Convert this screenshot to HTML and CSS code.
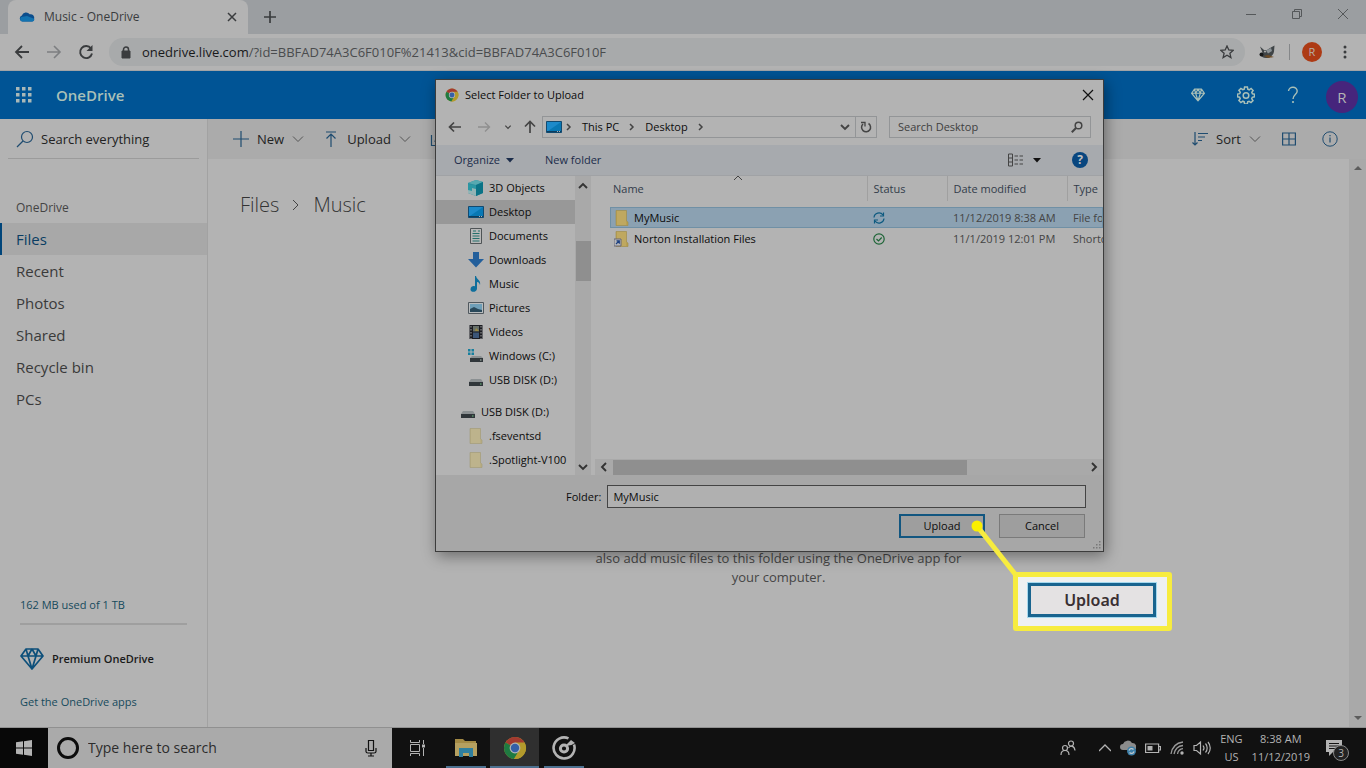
FILE: index.html
```html
<!DOCTYPE html>
<html lang="en">
<head>
<meta charset="utf-8">
<title>Music - OneDrive</title>
<link rel="stylesheet" href="styles.css">
</head>
<body>
<svg class="sprite" aria-hidden="true">
  <symbol id="chrome" viewBox="0 0 24 24">
    <circle cx="12" cy="12" r="11" fill="#b39a2c"/>
    <path d="M12 12 L2.5 6.5 A11 11 0 0 1 21.5 6.5 Z" fill="#a33a30"/>
    <path d="M12 12 L2.5 6.5 A11 11 0 0 0 11 23 L16 14.5 Z" fill="#1f7a41"/>
    <path d="M12 6.5 H21.5 A11 11 0 0 1 11 23 L16.5 14.5 Z" fill="#b39a2c"/>
    <circle cx="12" cy="12" r="5.4" fill="#b3b3b3"/>
    <circle cx="12" cy="12" r="4.2" fill="#3560a8"/>
  </symbol>
  <symbol id="folder" viewBox="0 0 16 16">
    <path d="M2 .5h10.500v10.500l1.500 1v3.500H2z" fill="#b8a052" stroke="#a08c48" stroke-width=".6"/>
    <path d="M3 1h9v14H3z" fill="#bfa860"/>
  </symbol>
  <symbol id="folder-pale" viewBox="0 0 16 16">
    <path d="M2 .5h10.500v10.500l1.500 1v3.500H2z" fill="#b8ad84" stroke="#a39a76" stroke-width=".6"/>
    <path d="M3 1h9v14H3z" fill="#bdb38c"/>
  </symbol>
  <symbol id="diamond" viewBox="0 0 24 24">
    <path d="M6 2h12l5 7-11 13L1 9zM1 9h22M6 2l2 7 4 13 4-13 2-7M8 9l4-7 4 7" fill="none" stroke="currentColor" stroke-width="1.700" stroke-linejoin="round"/>
  </symbol>
  <symbol id="chev" viewBox="0 0 12 12"><path d="M1 3.500l5 5 5-5" fill="none" stroke="currentColor" stroke-width="1"/></symbol>
  <symbol id="chev-bold" viewBox="0 0 12 12"><path d="M2 4l4 4 4-4" fill="none" stroke="currentColor" stroke-width="1.900"/></symbol>
  <symbol id="desktop" viewBox="0 0 16 16">
    <path d="M.5 2.500h15v11H.5z" fill="#0878b4" stroke="#124a70"/><path d="M1 3h14L2 12H1z" fill="#1c8aca"/><path d="M1 12.500h14" stroke="#0d3d5e"/><path d="M11 12.500h1M13 12.500h1" stroke="#b3b3b3"/>
  </symbol>
  <symbol id="drive" viewBox="0 0 16 16">
    <path d="M3 7h10l2 3H1z" fill="#8b9092"/><path d="M1 10h14v4H1z" fill="#30363a"/><path d="M12 12h1.500" stroke="#6cc080" stroke-width="1.200"/>
  </symbol>
</svg>

<header class="tabs">
  <div class="tab">
    <svg class="i16 cloud" viewBox="0 0 18 12"><path d="M4 11a3.500 3.500 0 0 1-.8-6.800A5 5 0 0 1 12 3a4 4 0 0 1 5 5 2.500 2.500 0 0 1-2 3z" fill="#0b4d8c"/><path d="M3 11a3 3 0 0 1-.6-5L9 5l8 3a2.300 2.300 0 0 1-2 3z" fill="#1373b0"/></svg>
    <span class="tab-title">Music - OneDrive</span>
    <button class="bare" aria-label="Close tab"><svg class="i10" viewBox="0 0 10 10"><path d="M1 1l8 8M9 1L1 9" stroke="#3a3c3e" stroke-width="1.500"/></svg></button>
  </div>
  <button class="bare newtab" aria-label="New tab"><svg class="i12" viewBox="0 0 12 12"><path d="M6 0v12M0 6h12" stroke="#3a3c3e" stroke-width="1.700"/></svg></button>
  <div class="winctl">
    <button class="bare" aria-label="Minimize"><svg class="i12" viewBox="0 0 12 12"><path d="M1 6.500h10" stroke="#55585a"/></svg></button>
    <button class="bare" aria-label="Restore"><svg class="i12" viewBox="0 0 12 12"><path d="M1.500 3.500h7v7h-7zM3.500 3.500v-2h7v7h-2" fill="none" stroke="#55585a"/></svg></button>
    <button class="bare" aria-label="Close"><svg class="i12" viewBox="0 0 12 12"><path d="M1 1l10 10M11 1L1 11" stroke="#55585a"/></svg></button>
  </div>
</header>

<div class="toolbar">
  <button class="bare" aria-label="Back"><svg class="i16" viewBox="0 0 16 16"><path d="M15 8H2M8 2L2 8l6 6" fill="none" stroke="#3a3c3e" stroke-width="1.800"/></svg></button>
  <button class="bare" aria-label="Forward"><svg class="i16" viewBox="0 0 16 16"><path d="M1 8h13M8 2l6 6-6 6" fill="none" stroke="#7d7f81" stroke-width="1.600"/></svg></button>
  <button class="bare" aria-label="Reload"><svg class="i16" viewBox="0 0 16 16"><path d="M13 4.500A6 6 0 1 0 14 9.500" fill="none" stroke="#3a3c3e" stroke-width="1.900"/><path d="M14.500 1v6h-6z" fill="#3a3c3e"/></svg></button>
  <div class="omnibox">
    <svg class="lock" viewBox="0 0 10 13"><path d="M1 5h8v7H1z" fill="#3a3c3e" stroke="#3a3c3e" stroke-linejoin="round"/><path d="M2.500 5V3.500a2.500 2.500 0 0 1 5 0V5" fill="none" stroke="#3a3c3e" stroke-width="1.500"/></svg>
    <span class="url"><span class="host">onedrive.live.com</span>/?id=BBFAD74A3C6F010F%21413&amp;cid=BBFAD74A3C6F010F</span>
    <button class="bare star" aria-label="Bookmark"><svg class="i14" viewBox="0 0 14 14"><path d="M7 1l1.800 4 4.400.400-3.300 2.900 1 4.300L7 10.300l-3.900 2.300 1-4.300L.8 5.400l4.400-.4z" fill="none" stroke="#3a3c3e" stroke-width="1.300"/></svg></button>
  </div>
  <svg class="i16 ext" viewBox="0 0 16 16"><path d="M1 2.500l4 3.500h3l3-2 4.500-2.500-.5 6c-.5 4-4 6.500-8 6.500-3 0-5-1.500-6-4l2.500-1.500z" fill="#3f4447"/><path d="M7 6.500l5-2.500 1 3-4 2.500z" fill="#8b9296"/><circle cx="2.500" cy="10.500" r="2" fill="#17191a"/><circle cx="6" cy="7.500" r="1" fill="#b3b3b3"/><path d="M5 12l4-1 6 2-6 1z" fill="#6b4a25"/></svg>
  <span class="bar"></span>
  <span class="profile">R</span>
  <button class="bare" aria-label="Menu"><svg class="i14" viewBox="0 0 14 14"><g fill="#3a3c3e"><circle cx="7" cy="2" r="1.500"/><circle cx="7" cy="7" r="1.500"/><circle cx="7" cy="12" r="1.500"/></g></svg></button>
</div>

<div class="suite">
  <svg class="i16" viewBox="0 0 16 16"><g fill="#a9b8b8"><path d="M0 0h3.500v3.500H0zM6 0h3.500v3.500H6zM12 0h3.500v3.500H12zM0 6h3.500v3.500H0zM6 6h3.500v3.500H6zM12 6h3.500v3.500H12zM0 12h3.500v3.500H0zM6 12h3.500v3.500H6zM12 12h3.500v3.500H12z"/></g></svg>
  <h1 class="brand">OneDrive</h1>
  <div class="suite-icons">
    <svg class="i14" viewBox="0 0 24 24"><path d="M6 2h12l5 7-11 13L1 9zM1 9h22M6 2l2 7 4 13 4-13 2-7M8 9l4-7 4 7" fill="none" stroke="currentColor" stroke-width="2" stroke-linejoin="round"/></svg>
    <svg class="i18" viewBox="0 0 18 18"><path d="M7.600 1h2.800l.4 2.200 1.400.6 1.900-1.300 2 2-1.300 1.900.6 1.400 2.100.4v2.600l-2.200.5-.6 1.400 1.300 1.900-2 2-1.900-1.300-1.400.6-.4 2.100H7.600l-.4-2.200-1.400-.6-1.900 1.300-2-2 1.300-1.900-.6-1.400-2.100-.4V8.100l2.200-.4.6-1.400-1.400-1.900 2-2 1.900 1.300 1.400-.6z" fill="none" stroke="currentColor" stroke-width="1.500"/><circle cx="9" cy="9.500" r="2.800" fill="none" stroke="currentColor" stroke-width="1.500"/></svg>
    <svg class="i18" viewBox="0 0 18 18"><path d="M4.500 5A4.300 4.300 0 0 1 9 1.200 4 4 0 0 1 13.200 5c0 3.500-4.200 3.500-4.200 8" fill="none" stroke="currentColor" stroke-width="1.400"/><circle cx="9" cy="16" r="1.100" fill="currentColor"/></svg>
    <span class="avatar">R</span>
  </div>
</div>

<div class="app">
  <aside class="side">
    <label class="search"><svg class="i18" viewBox="0 0 18 18"><circle cx="11" cy="7" r="5.500" fill="none" stroke="#1f4c70" stroke-width="1.200"/><path d="M7 11l-6 6" stroke="#1f4c70" stroke-width="1.200"/></svg><input type="text" placeholder="Search everything" aria-label="Search everything"></label>
    <h2 class="side-title">OneDrive</h2>
    <nav class="side-nav">
      <a class="on" href="#">Files</a><a href="#">Recent</a><a href="#">Photos</a><a href="#">Shared</a><a href="#">Recycle bin</a><a href="#">PCs</a>
    </nav>
    <div class="side-foot">
      <a class="used" href="#">162 MB used of 1 TB</a>
      <a class="premium" href="#"><svg class="i24" viewBox="0 0 24 24"><use href="#diamond"/></svg>Premium OneDrive</a>
      <a class="apps" href="#">Get the OneDrive apps</a>
    </div>
  </aside>
  <main class="main">
    <div class="cmd">
      <button class="bare"><svg class="i16" viewBox="0 0 16 16"><path d="M8 0v16M0 8h16" stroke="#1f4c70" stroke-width="1.200"/></svg>New<svg class="i12 dim" viewBox="0 0 12 12"><use href="#chev"/></svg></button>
      <button class="bare"><svg class="i16" viewBox="0 0 16 16"><path d="M3 1h10M8 16V3M3.500 7.500L8 3l4.500 4.500" fill="none" stroke="#1f4c70" stroke-width="1.200"/></svg>Upload<svg class="i12 dim" viewBox="0 0 12 12"><use href="#chev"/></svg></button>
      <svg class="i16" viewBox="0 0 16 16"><path d="M1.500 4v10.500H13V10M5 11c0-4 3-6 8-6" fill="none" stroke="#1f4c70" stroke-width="1.200"/></svg>
      <button class="bare sort"><svg class="i16" viewBox="0 0 16 16"><path d="M3 1v13M.5 11.500L3 14l2.500-2.500M6 2.500h10M6 6h7M6 9.500h4" fill="none" stroke="#1f4c70" stroke-width="1.200"/></svg>Sort<svg class="i12 dim" viewBox="0 0 12 12"><use href="#chev"/></svg></button>
      <button class="bare" aria-label="Tiles"><svg class="i14" viewBox="0 0 14 14"><path d="M.6 1h12.800v12H.6zM7 1v12M.6 7h12.800" fill="none" stroke="#1f4c70" stroke-width="1.200"/></svg></button>
      <button class="bare info" aria-label="Details"><svg class="i16" viewBox="0 0 16 16"><circle cx="8" cy="8" r="7.200" fill="none" stroke="#1f4c70"/><path d="M8 6.500v5M8 4v1.300" stroke="#1f4c70" stroke-width="1.200"/></svg></button>
    </div>
    <div class="stage">
      <div class="content">
        <div class="crumbs"><a href="#">Files</a><svg class="i12" viewBox="0 0 12 12"><path d="M3 1l5 5-5 5" fill="none" stroke="#444"/></svg><span>Music</span></div>
        <p class="empty">also add music files to this folder using the OneDrive app for your computer.</p>
      </div>
      <div class="page-scroll"><svg class="i10" viewBox="0 0 10 10"><path d="M1 7l4-4 4 4z" fill="#5c5c5c"/></svg><svg class="i10" viewBox="0 0 10 10"><path d="M1 3l4 4 4-4z" fill="#5c5c5c"/></svg></div>
    </div>
  </main>
</div>

<footer class="taskbar">
  <button class="bare start" aria-label="Start"><svg class="i16" viewBox="0 0 16 16"><path d="M0 2.300L7 1.300v6.200H0zM8 1.200L16 0v7.500H8zM0 8.500h7v6.200l-7-1zM8 8.500h8V16l-8-1.200z" fill="#b3b3b3"/></svg></button>
  <label class="tsearch"><span class="cortana"></span><input type="text" placeholder="Type here to search" aria-label="Type here to search"><svg class="i18" viewBox="0 0 18 18"><path d="M6.500 1.500h5v10h-5zM4 9v3.500c0 1 1 1.500 2 1.500h6c1 0 2-.5 2-1.500V9M9 14v3M6 17h6" fill="none" stroke="#111" stroke-width="1.200"/></svg></label>
  <button class="bare task" aria-label="Task view"><svg class="i18" viewBox="0 0 18 18"><path d="M2.500 5.500h9v7h-9zM2.500 1v2.500h9V1M2.500 17v-2.500h9V17M15.500 1v4M15.500 9v8" fill="none" stroke="#b3b3b3"/><path d="M14 5.500h3v3h-3z" fill="#b3b3b3"/></svg></button>
  <button class="bare task open" aria-label="File Explorer"><svg class="i24" viewBox="0 0 24 24"><path d="M1 3h8l2 2h11v15H1z" fill="#a38a45"/><path d="M1 7h22v13H1z" fill="#b5a060"/><path d="M5 12h14v9h-4v-4H9v4H5z" fill="#2f7f9e"/></svg></button>
  <button class="bare task open active" aria-label="Chrome"><svg class="i24" viewBox="0 0 24 24"><use href="#chrome"/></svg></button>
  <button class="bare task open" aria-label="Groove Music"><svg class="i24" viewBox="0 0 24 24"><path d="M16.500 2.400A10.500 10.500 0 1 0 22 8.500" fill="none" stroke="#b3b3b3" stroke-width="2.600"/><circle cx="12" cy="12.500" r="3.600" fill="none" stroke="#b3b3b3" stroke-width="3"/><path d="M14.500 12V8.500L19 4l4 3-3.500 2-3 .5z" fill="#b3b3b3"/></svg></button>
  <div class="tray">
    <svg class="i16 people" viewBox="0 0 16 16"><g fill="none" stroke="#b3b3b3" stroke-width="1.200"><circle cx="5" cy="8" r="2.500"/><path d="M1 15c0-6 8-6 8 0"/><circle cx="11" cy="3.500" r="2.500"/><path d="M8.500 8c2-3 6-2 6.500 2.500"/></g></svg>
    <svg class="i12" viewBox="0 0 12 12"><path d="M0 9l6-6 6 6" fill="none" stroke="#b3b3b3" stroke-width="1.300"/></svg>
    <svg class="i16" viewBox="0 0 16 16"><path d="M3 10a3 3 0 0 1 0-6 5 5 0 0 1 9-1 4 4 0 0 1 3 7z" fill="#8c8c8c"/><circle cx="11.500" cy="11" r="4.500" fill="#3d7fa8"/><path d="M9 10.500a2.600 2.600 0 0 1 4.500-1M14 11.500a2.600 2.600 0 0 1-4.500 1" stroke="#c0c8cc" fill="none" stroke-width="1.200"/></svg>
    <svg class="i16" viewBox="0 0 16 16"><path d="M.6 4h13v8.500H.6zM14 6.500h1.500v3.500H14" fill="none" stroke="#b3b3b3" stroke-width="1.200"/><path d="M2.500 6h5v4.500h-5z" fill="#b3b3b3"/></svg>
    <svg class="i14" viewBox="0 0 14 14"><g fill="none" stroke="#999" stroke-width="1.300"><path d="M1 13C2 6 6 2 13 1"/><path d="M4 13c1-5 4-8 9-8.500"/><path d="M7.500 13c.5-3 2.500-5 5.500-5.300"/></g><circle cx="12" cy="12" r="1.700" fill="#b3b3b3"/></svg>
    <svg class="i18" viewBox="0 0 18 18"><g fill="none" stroke="#b3b3b3" stroke-width="1.200"><path d="M1 6.500h2.500L7.500 3v12l-4-3.500H1zM10 6.500c1.200 1.500 1.200 3.500 0 5M12.500 4.500c2.200 2.500 2.200 6.500 0 9M15 3c3 3.500 3 8.500 0 12"/></g></svg>
    <div class="stack">ENG<br>US</div>
    <div class="stack clock">8:38 AM<br>11/12/2019</div>
    <div class="notif"><svg class="i18" viewBox="0 0 18 18"><path d="M1 1h16v12H8l-4 4v-4H1z" fill="#b3b3b3"/><path d="M4 4.500h10M4 7h10M4 9.500h7" stroke="#141414"/></svg><span class="count">3</span></div>
  </div>
</footer>

<section class="dialog" role="dialog" aria-label="Select Folder to Upload">
  <div class="d-title"><svg class="i14" viewBox="0 0 24 24"><use href="#chrome"/></svg><span>Select Folder to Upload</span><button class="bare" aria-label="Close"><svg class="i12" viewBox="0 0 12 12"><path d="M1 1l10 10M11 1L1 11" stroke="#111" stroke-width="1.200"/></svg></button></div>
  <div class="d-nav">
    <button class="bare" aria-label="Back"><svg class="i14" viewBox="0 0 14 14"><path d="M13 7H2M6 2.500L1.500 7 6 11.500" fill="none" stroke="#444" stroke-width="1.700"/></svg></button>
    <button class="bare" aria-label="Forward"><svg class="i14" viewBox="0 0 14 14"><path d="M1 7h11M8 2.500L12.500 7 8 11.500" fill="none" stroke="#8f8f8f" stroke-width="1.400"/></svg></button>
    <button class="bare hist" aria-label="Recent"><svg class="i8" viewBox="0 0 12 12"><use href="#chev-bold"/></svg></button>
    <button class="bare" aria-label="Up"><svg class="i14" viewBox="0 0 14 14"><path d="M7 13V2M2 6.500L7 1.500l5 5" fill="none" stroke="#444" stroke-width="1.700"/></svg></button>
    <div class="path"><svg class="i16" viewBox="0 0 16 16"><use href="#desktop"/></svg><svg class="i8" viewBox="0 0 8 8"><path d="M2 1l3 3-3 3" fill="none" stroke="#444" stroke-width="1.500"/></svg><span>This PC</span><svg class="i8" viewBox="0 0 8 8"><path d="M2 1l3 3-3 3" fill="none" stroke="#444" stroke-width="1.500"/></svg><span>Desktop</span><svg class="i8" viewBox="0 0 8 8"><path d="M2 1l3 3-3 3" fill="none" stroke="#444" stroke-width="1.500"/></svg>
      <button class="bare drop" aria-label="Previous locations"><svg class="i12" viewBox="0 0 12 12"><use href="#chev-bold"/></svg></button>
      <button class="bare refresh" aria-label="Refresh"><svg class="i12" viewBox="0 0 12 12"><path d="M8.500 2.500A4.500 4.500 0 1 1 3 3" fill="none" stroke="#444" stroke-width="1.500"/><path d="M1 1.500h4v4" fill="none" stroke="#444" stroke-width="1.300"/></svg></button>
    </div>
    <label class="d-search"><input type="text" placeholder="Search Desktop" aria-label="Search Desktop"><svg class="i12" viewBox="0 0 12 12"><circle cx="7.500" cy="4.500" r="3.300" fill="none" stroke="#444" stroke-width="1.500"/><path d="M5 7L.8 11.200" stroke="#444" stroke-width="2"/></svg></label>
  </div>
  <div class="d-tools">
    <button class="bare">Organize<svg class="i8" viewBox="0 0 8 8"><path d="M0 2h8L4 6.500z" fill="#1b2c4a"/></svg></button>
    <button class="bare">New folder</button>
    <button class="bare view" aria-label="Change view"><svg class="i16" viewBox="0 0 16 14"><path d="M.5 1h4v12h-4zM.5 5h4M.5 9h4M6.500 3H10M11.500 3H15M6.500 7H10M11.500 7H15M6.500 11H10M11.500 11H15" fill="none" stroke="#444"/></svg><svg class="i8" viewBox="0 0 8 8"><path d="M0 2h8L4 6.500z" fill="#111"/></svg></button>
    <button class="help" aria-label="Help">?</button>
  </div>
  <div class="d-body">
    <div class="tree">
      <a class="row" href="#"><svg class="i16" viewBox="0 0 16 16"><path d="M0 3l8-3 7 2v11l-7 3-8-3z" fill="#2a8d9d"/><path d="M0 3l8-3 7 2-7 3z" fill="#56a9b0"/><path d="M0 4l8 1.500V9l-4-1v4l-4-1z" fill="#2b97a3"/><path d="M0 10l4 1V8l4 1v7l-8-3z" fill="#93b4b5"/><path d="M8 5l7-3v11l-7 3z" fill="#0b7386"/></svg>3D Objects</a>
      <a class="row on" href="#"><svg class="i16" viewBox="0 0 16 16"><use href="#desktop"/></svg>Desktop</a>
      <a class="row" href="#"><svg class="i16" viewBox="0 0 16 16"><path d="M2.500.5h11v15h-11z" fill="#b8b8b8" stroke="#4f5456"/><path d="M5 3h3M10 3h2M4.500 5.500h7M4.500 8h7M4.500 10.500h7M4.500 13h7" stroke="#25706c"/></svg>Documents</a>
      <a class="row" href="#"><svg class="i16" viewBox="0 0 16 16"><path d="M5 0h6v7h5l-8 8.500L0 7h5z" fill="#235f9b"/></svg>Downloads</a>
      <a class="row" href="#"><svg class="i16" viewBox="0 0 16 16"><path d="M8 0c1 4 5 4 4 9-.5-2-1.500-3-3-3v6.500c0 4-6.500 4.500-6.500 1S6 9.500 7 10.500V0z" fill="#0f6f9c"/></svg>Music</a>
      <a class="row" href="#"><svg class="i16" viewBox="0 0 16 16"><path d="M.5 2.500h15v11H.5z" fill="#b8bcbe" stroke="#50585e"/><path d="M2 4h12v8H2z" fill="#6f9fb8"/><path d="M2 9l4-2 4 2 4 1v2H2z" fill="#29485a"/></svg>Pictures</a>
      <a class="row" href="#"><svg class="i16" viewBox="0 0 16 16"><path d="M1.500 1h13v14h-13z" fill="#1b1c22"/><path d="M5 2h6v5.500H5z" fill="#67706a"/><path d="M5 8.500h6V14H5z" fill="#3c5678"/><path d="M3 2v13M13 2v13" stroke="#a0a0a0" stroke-dasharray="1.500 1.500"/><path d="M8 4l3 3H7z" fill="#9c8a40"/></svg>Videos</a>
      <a class="row" href="#"><svg class="i16" viewBox="0 0 16 16"><path d="M0 1h2.500v2.500H0zM3.500 1H6v2.500H3.500zM0 4.500h2.500V7H0zM3.500 4.500H6V7H3.500z" fill="#167f9e"/><path d="M4 8h9l2 2H2z" fill="#8b9092"/><path d="M2 10h13v4H2z" fill="#30363a"/><path d="M12 12h1.500" stroke="#b0c0b4"/></svg>Windows (C:)</a>
      <a class="row" href="#"><svg class="i16" viewBox="0 0 16 16"><use href="#drive"/></svg>USB DISK (D:)</a>
      <a class="row root" href="#"><svg class="i16" viewBox="0 0 16 16"><use href="#drive"/></svg>USB DISK (D:)</a>
      <a class="row" href="#"><svg class="i16" viewBox="0 0 16 16"><use href="#folder-pale"/></svg>.fseventsd</a>
      <a class="row" href="#"><svg class="i16" viewBox="0 0 16 16"><use href="#folder-pale"/></svg>.Spotlight-V100</a>
    </div>
    <div class="vscroll"><svg class="i12 flip" viewBox="0 0 12 12"><use href="#chev-bold"/></svg><span class="vthumb"></span><svg class="i12" viewBox="0 0 12 12"><use href="#chev-bold"/></svg></div>
    <div class="files">
      <svg class="i10 sorted" viewBox="0 0 10 10"><path d="M1 7l4-4 4 4" fill="none" stroke="#444"/></svg>
      <table>
        <colgroup><col><col class="c-status"><col class="c-date"><col class="c-type"></colgroup>
        <thead><tr><th>Name</th><th>Status</th><th>Date modified</th><th>Type</th></tr></thead>
        <tbody>
          <tr class="sel"><td><span class="file"><svg class="i16" viewBox="0 0 16 16"><use href="#folder"/></svg>MyMusic</span></td><td><svg class="i12" viewBox="0 0 12 12"><path d="M1 5.500a5 5 0 0 1 9-2.500M11 6.500A5 5 0 0 1 2 9M10.500.5V4H7M1.500 11.500V8H5" fill="none" stroke="#0d5a80" stroke-width="1.200"/></svg></td><td>11/12/2019 8:38 AM</td><td>File folder</td></tr>
          <tr><td><span class="file"><svg class="i16" viewBox="0 0 16 16"><use href="#folder"/><path d="M0 8h7v7H0z" fill="#b8b8b8" stroke="#667"/><path d="M2 13l3-3M2.500 9.800H5.300v3" stroke="#1b3f80" fill="none" stroke-width="1.200"/></svg>Norton Installation Files</span></td><td><svg class="i12" viewBox="0 0 12 12"><circle cx="6" cy="6" r="5.200" fill="none" stroke="#1c6436" stroke-width="1.200"/><path d="M3.500 6l2 2 3.200-3.500" fill="none" stroke="#1c6436" stroke-width="1.200"/></svg></td><td>11/1/2019 12:01 PM</td><td>Shortcut</td></tr>
        </tbody>
      </table>
      <div class="hscroll"><svg class="i12 left" viewBox="0 0 12 12"><use href="#chev-bold"/></svg><span class="htrack"><span class="hthumb"></span></span><svg class="i12 right" viewBox="0 0 12 12"><use href="#chev-bold"/></svg></div>
    </div>
  </div>
  <div class="d-foot">
    <div class="field"><label for="folder-name">Folder:</label><input id="folder-name" type="text" value="MyMusic"></div>
    <div class="actions"><button class="btn primary">Upload</button><button class="btn">Cancel</button></div>
    <svg class="i8 grip" viewBox="0 0 8 8"><path d="M6 0h1.500v1.500H6zM3 3h1.500v1.500H3zM6 3h1.500v1.500H6zM0 6h1.500v1.500H0zM3 6h1.500v1.500H3zM6 6h1.500v1.500H6z" fill="#787878"/></svg>
  </div>
</section>

<svg class="pointer" viewBox="0 0 50 60"><path d="M7 7l38 48" stroke="#f7ec3f" stroke-width="5"/><circle cx="7" cy="7" r="5.500" fill="#fbf000"/></svg>
<div class="callout"><span>Upload</span></div>
</body>
</html>
```
FILE: styles.css
```css
* { box-sizing: border-box; }
html, body { height: 100%; }
body {
  margin: 0;
  display: flex;
  flex-direction: column;
  position: relative;
  overflow: hidden;
  background: #b3b3b3;
  color: #222;
  font: 13px/18px "Open Sans", "Noto Sans", sans-serif;
}
a { color: inherit; text-decoration: none; }
h1, h2, p { margin: 0; font-weight: 400; }
svg { flex: none; display: block; }
input { font: inherit; color: inherit; border: 0; background: none; padding: 0; min-width: 0; outline: 0; }
input::placeholder { color: inherit; opacity: 1; }
.bare { font: inherit; color: inherit; background: none; border: 0; padding: 0; display: flex; align-items: center; }
.sprite { position: absolute; width: 0; height: 0; }
.i8 { width: 8px; height: 8px; }
.i10 { width: 10px; height: 10px; }
.i12 { width: 12px; height: 12px; }
.i14 { width: 14px; height: 14px; }
.i16 { width: 16px; height: 16px; }
.i18 { width: 18px; height: 18px; }
.i24 { width: 24px; height: 24px; }
.dim { color: #555; }

/* Browser chrome */
.tabs { display: flex; flex: none; height: 34px; background: #9b9ea1; padding-left: 8px; }
.tab { display: flex; align-items: center; width: 240px; padding: 0 11px; background: #b3b3b3; border-radius: 8px 8px 0 0; font-size: 12px; color: #3a3c3e; }
.cloud { height: 12px; }
.tab-title { flex: 1; margin-left: 9px; }
.newtab { margin-left: 16px; }
.winctl { display: flex; margin: 0 17px 6px auto; gap: 34px; }
.toolbar { display: flex; align-items: center; flex: none; height: 37px; padding: 0 14px; border-bottom: 1px solid #a0a3a6; }
.toolbar > .bare + .bare { margin-left: 16px; }
.omnibox { flex: 1; display: flex; align-items: center; height: 28px; margin-left: 15px; padding: 0 11px 0 12px; border-radius: 14px; background: #a8aaab; }
.lock { width: 10px; height: 13px; }
.url { flex: 1; margin-left: 11px; color: #4a4c4e; white-space: nowrap; }
.host { color: #18191a; }
.ext { margin-left: 14px; }
.bar { width: 1px; height: 16px; margin: 0 12px 0 14px; background: #858789; }
.profile { width: 20px; height: 20px; margin-right: 16px; border-radius: 50%; background: #ad3a14; color: #b8b0a8; font-size: 11px; line-height: 20px; text-align: center; }

/* Suite header */
.suite { display: flex; align-items: center; flex: none; height: 48px; padding-left: 16px; background: #005495; color: #a9c0b8; }
.brand { margin-left: 24px; font-size: 15px; font-weight: 600; }
.suite-icons { display: flex; align-items: center; gap: 32px; margin: 4px 8px 0 auto; }
.suite-icons svg { margin-bottom: 4px; }
.suite-icons .i18 + .i18 { margin: 0 -8px 4px -3px; }
.avatar { width: 32px; height: 32px; border-radius: 50%; background: #46257c; color: #b3b3b3; font-size: 15px; line-height: 32px; text-align: center; }

/* OneDrive page */
.app { flex: 1; display: flex; min-height: 0; border-bottom: 1px solid #909090; }
.side { flex: none; width: 208px; display: flex; flex-direction: column; border-right: 1px solid #a2a2a2; }
.search { display: flex; align-items: center; gap: 7px; height: 40px; margin: 0 8px; padding-left: 8px; border-bottom: 1px solid #9b9b9b; }
.search input { flex: 1; }
.side-title { margin: 40px 0 6px 16px; font-size: 12px; color: #444; }
.side-nav { display: flex; flex-direction: column; font-size: 15px; line-height: 32px; color: #3a3a3a; }
.side-nav a { padding-left: 16px; }
.side-nav .on { padding-left: 14px; border-left: 2px solid #00457a; background: #a8a8a8; color: #0a3d63; }
.side-foot { display: flex; flex-direction: column; margin: auto 20px 16px; font-size: 11px; color: #164a5c; }
.used { padding-bottom: 9px; border-bottom: 2px solid #9f9f9f; }
.premium { display: flex; align-items: center; gap: 8px; margin: 22px 0; color: #1a1a1a; font-weight: 600; }
.premium svg { color: #0c4f7a; }
.main { flex: 1; display: flex; flex-direction: column; min-width: 0; }
.cmd { display: flex; align-items: center; flex: none; height: 40px; padding: 0 28px 0 25px; gap: 19px; background: #ababab; }
.cmd .bare { gap: 8px; }
.cmd .sort { margin: 0 2px 0 auto; }
.info { margin-left: 7px; }
.stage { flex: 1; display: flex; min-height: 0; }
.content { flex: 1; padding-top: 30px; }
.crumbs { display: flex; align-items: center; gap: 11px; padding-left: 32px; font: 300 20px/32px "Open Sans", sans-serif; color: #333; }
.empty { width: 382px; margin: 328px auto 0; color: #454545; line-height: 19px; text-align: center; }
.page-scroll { width: 17px; display: flex; flex-direction: column; justify-content: space-between; align-items: center; padding: 4px 0; background: #a9a9a9; }

/* Taskbar */
.taskbar { display: flex; align-items: center; flex: none; height: 40px; background: #111; color: #b3b3b3; }
.start { width: 48px; height: 40px; justify-content: center; background: #080808; }
.tsearch { display: flex; align-items: center; width: 344px; height: 40px; padding: 0 12px 0 9px; background: #aaa; color: #2c2c2c; font-size: 14px; }
.tsearch input { flex: 1; margin-left: 9px; }
.cortana { width: 22px; height: 22px; border: 3px solid #0c0c0c; border-radius: 50%; }
.task { justify-content: center; width: 49px; height: 40px; }
.open { background: linear-gradient(#4d7190, #4d7190) bottom / 40px 2px no-repeat; }
.active { background-color: #2f2f2f; background-size: 100% 2px; }
.tray { display: flex; align-items: center; gap: 9px; margin-left: auto; padding-right: 12px; }
.people { margin-right: 14px; }
.stack { font-size: 11px; line-height: 18px; text-align: center; }
.notif { position: relative; margin: 0 11px 0 6px; }
.count { position: absolute; left: 8px; top: 6px; width: 16px; height: 16px; border: 1px solid #888; border-radius: 50%; background: #222; font-size: 10px; line-height: 14px; text-align: center; }

/* Folder picker window */
.dialog { position: absolute; left: 435px; top: 79px; width: 669px; border: 1px solid #3c3c3c; background: #b3b3b3; color: #0c0c0c; font-size: 11px; line-height: 16px; box-shadow: 2px 4px 14px rgba(0, 0, 0, .4); }
.d-title { display: flex; align-items: center; gap: 6px; height: 29px; padding: 0 9px; }
.d-title .bare { margin-left: auto; }
.d-nav { display: flex; align-items: center; height: 36px; padding: 0 12px; color: #444; }
.d-nav > .bare + .bare { margin-left: 15px; }
.d-nav > .hist + .bare { margin-left: 11px; }
.d-nav > .bare + .hist { margin-left: 13px; }
.path { flex: 1; display: flex; align-items: center; gap: 9px; height: 22px; margin: 0 12px 0 5px; padding-left: 3px; border: 1px solid #939597; color: #0c0c0c; }
.path > .i16 { margin-right: -6px; }
.path .drop { margin-left: auto; color: #444; }
.path .refresh { align-self: stretch; margin-left: -5px; padding: 0 4px; border-left: 1px solid #939597; }
.d-search { display: flex; align-items: center; width: 202px; height: 22px; padding: 0 7px 0 8px; border: 1px solid #939597; color: #404040; }
.d-search input { flex: 1; }
.d-tools { display: flex; align-items: center; height: 31px; padding: 0 15px 0 18px; gap: 31px; background: #a7aaae; border-bottom: 1px solid #a0a2a5; color: #1b2c4a; }
.d-tools .bare { gap: 6px; }
.d-tools .view { gap: 9px; margin-left: auto; }
.help { width: 16px; height: 16px; padding: 0; border: 0; border-radius: 50%; background: #08467f; color: #c0c0c0; font: 700 12px/16px "Open Sans", sans-serif; }
.d-body { display: flex; height: 299px; }
.tree { width: 139px; overflow: hidden; }
.row { display: flex; align-items: center; gap: 5px; height: 24px; padding-left: 32px; white-space: nowrap; }
.row.on { background: #989898; }
.row.root { margin-top: 8px; padding-left: 24px; }
.vscroll { display: flex; flex-direction: column; align-items: center; width: 16px; padding: 4px 0 2px; background: #a9a9a9; color: #333; }
.vthumb { width: 15px; height: 40px; margin: 49px 0 auto; background: #8f8f8f; }
.flip { transform: rotate(180deg); }
.left { transform: rotate(90deg); }
.right { transform: rotate(-90deg); }
.files { position: relative; flex: 1; display: flex; flex-direction: column; min-width: 0; margin-left: 4px; overflow: hidden; }
.sorted { position: absolute; left: 138px; top: -3px; }
table { width: calc(100% - 15px); margin-left: 15px; table-layout: fixed; border-collapse: collapse; }
.c-status { width: 80px; }
.c-date { width: 120px; }
.c-type { width: 36px; }
th, td { padding: 0 0 0 6px; overflow: hidden; text-align: left; font-weight: 400; white-space: nowrap; color: #444; }
th { height: 25px; color: #323c4a; border-left: 1px solid #a0a0a0; }
th:first-child { padding-left: 3px; border-left: 0; }
tbody::before { content: ""; display: block; height: 6px; }
td { height: 21px; }
td:first-child { color: #0c0c0c; }
.file { display: flex; align-items: center; gap: 4px; margin-left: -2px; }
.sel { background: #8ba1b2; outline: 1px solid #7090a5; outline-offset: -1px; }
.hscroll { display: flex; align-items: center; height: 16px; margin-top: auto; padding: 0 3px; background: #a9a9a9; color: #333; }
.htrack { flex: 1; height: 15px; margin: 0 3px; }
.hthumb { display: block; width: 75%; height: 15px; background: #8f8f8f; }
.d-foot { position: relative; height: 76px; padding: 10px 17px 0; background: #a7a7a7; }
.field { display: flex; align-items: center; gap: 6px; padding-left: 113px; }
.field input { flex: 1; height: 23px; padding: 0 5px; border: 1px solid #444; background: #b0b0b0; }
.actions { display: flex; justify-content: flex-end; gap: 14px; margin-top: 6px; padding-right: 1px; }
.btn { width: 86px; height: 24px; border: 1px solid #7a7a7a; background: #9e9e9e; color: inherit; font: inherit; padding: 0; }
.primary { border: 2px solid #125680; }
.grip { position: absolute; right: 2px; bottom: 2px; }

/* Highlighted action */
.pointer { position: absolute; left: 970px; top: 519px; width: 50px; height: 60px; }
.callout { position: absolute; left: 1013px; top: 572px; width: 159px; padding: 6px 11px 9px 10px; border: 5px solid #f7ec3f; border-radius: 3px; background: #eef0f2; }
.callout span { display: block; border: 3px solid #19648f; background: #e4e2e3; outline: 1px solid #a5d8ee; color: #3a3033; font: 600 16px/28px "Noto Sans", sans-serif; text-align: center; }
```
